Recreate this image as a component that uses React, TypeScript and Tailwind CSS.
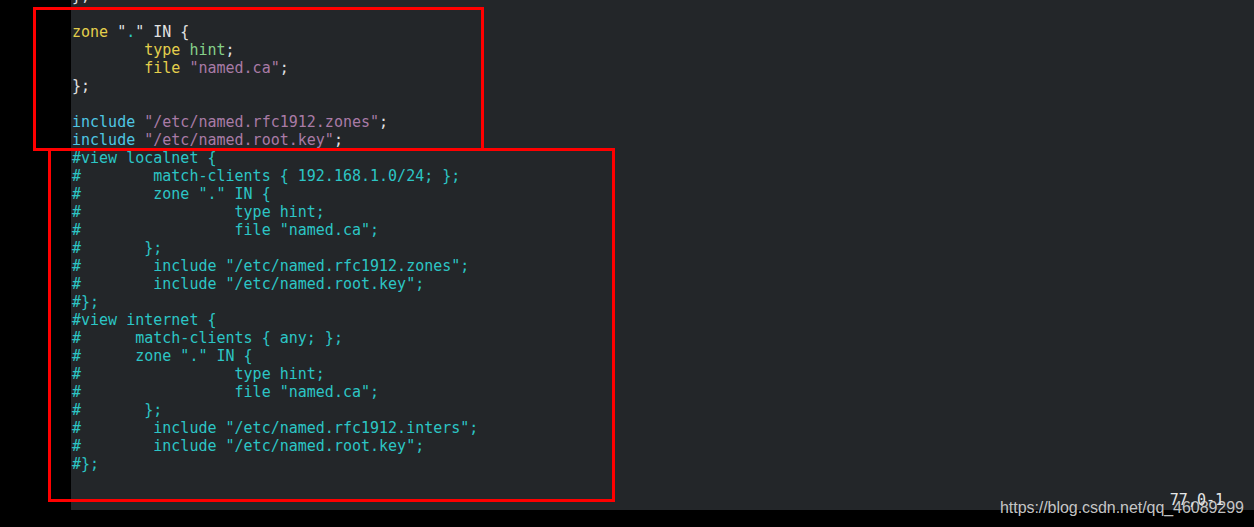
import React from "react";

const Y = "text-[#e3cf4c]";
const G = "text-[#86d18a]";
const P = "text-[#a97ba6]";
const C = "text-[#4fc6e4]";
const W = "text-[#e2e2e2]";
const T = "text-[#2cc5c5]";

type Seg = [string, string];

const top: Seg[][] = [
  [["};", W]],
  [],
  [["zone", Y], [" \"", W], [".", T], ["\" IN {", W]],
  [["        ", W], ["type", Y], [" ", W], ["hint", G], [";", W]],
  [["        ", W], ["file", Y], [" ", W], ["\"named.ca\"", P], [";", W]],
  [["};", W]],
  [],
  [["include", C], [" ", W], ["\"/etc/named.rfc1912.zones\"", P], [";", W]],
  [["include", C], [" ", W], ["\"/etc/named.root.key\"", P], [";", W]],
];

const comments = [
  "#view localnet {",
  "#        match-clients { 192.168.1.0/24; };",
  "#        zone \".\" IN {",
  "#                 type hint;",
  "#                 file \"named.ca\";",
  "#       };",
  "#        include \"/etc/named.rfc1912.zones\";",
  "#        include \"/etc/named.root.key\";",
  "#};",
  "#view internet {",
  "#      match-clients { any; };",
  "#      zone \".\" IN {",
  "#                 type hint;",
  "#                 file \"named.ca\";",
  "#       };",
  "#        include \"/etc/named.rfc1912.inters\";",
  "#        include \"/etc/named.root.key\";",
  "#};",
  "",
];

export default function App() {
  const mono = { fontFamily: '"DejaVu Sans Mono", monospace' };
  return (
    <div className="relative w-[1254px] h-[527px] bg-black overflow-hidden">
      <div className="ml-[71px] w-[1183px] h-[510px] bg-[#232629] overflow-hidden">
        <div
          className="mt-[-13px] pl-[1px] text-[15px] leading-[18px] whitespace-pre flex flex-col"
          style={mono}
        >
          {top.map((line, i) => (
            <div key={i} className="h-[18px]">
              {line.map(([t, c], j) => (
                <span key={j} className={c}>
                  {t}
                </span>
              ))}
            </div>
          ))}
          {comments.map((l, i) => (
            <div key={"c" + i} className={`h-[18px] ${T}`}>
              {l}
            </div>
          ))}
          <div className="h-[18px] flex justify-end pr-[30px] text-[#e6e6e6]">
            77,0-1
          </div>
        </div>
      </div>

      <div className="absolute left-[33px] top-[7px] w-[451px] h-[144px] border-[3px] border-[#ff0000]" />
      <div className="absolute left-[48px] top-[148px] w-[567px] h-[354px] border-[3px] border-[#ff0000]" />

      <div
        className="absolute left-[1000px] top-[497px] text-[16px] leading-[22px] text-[#dcdcdc]/90 whitespace-nowrap tracking-[-0.05px]"
        style={{ fontFamily: '"Liberation Sans", Arial, sans-serif' }}
      >
        https://blog.csdn.net/qq_46089299
      </div>
    </div>
  );
}
